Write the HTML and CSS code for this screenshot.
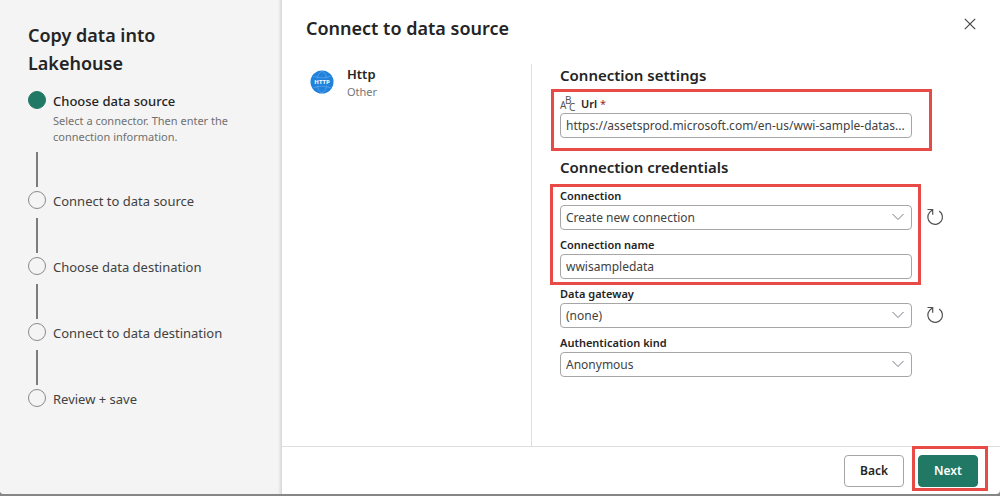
FILE: index.html
```html
<!DOCTYPE html>
<html lang="en">
<head>
<meta charset="utf-8">
<meta name="viewport" content="width=device-width, initial-scale=1">
<title>Copy data into Lakehouse</title>
<link rel="stylesheet" href="styles.css">
</head>
<body>
<div class="wizard">
  <aside class="sidebar">
    <h1 class="sidebar-title">Copy data into Lakehouse</h1>
    <ol class="steps">
      <li class="step step-active">
        <span class="rail"><span class="dot"></span><span class="line"></span></span>
        <div class="step-text">
          <div class="step-name">Choose data source</div>
          <p class="step-note">Select a connector. Then enter the connection information.</p>
        </div>
      </li>
      <li class="step">
        <span class="rail"><span class="dot"></span><span class="line"></span></span>
        <div class="step-text"><div class="step-name">Connect to data source</div></div>
      </li>
      <li class="step">
        <span class="rail"><span class="dot"></span><span class="line"></span></span>
        <div class="step-text"><div class="step-name">Choose data destination</div></div>
      </li>
      <li class="step">
        <span class="rail"><span class="dot"></span><span class="line"></span></span>
        <div class="step-text"><div class="step-name">Connect to data destination</div></div>
      </li>
      <li class="step">
        <span class="rail"><span class="dot"></span></span>
        <div class="step-text"><div class="step-name">Review + save</div></div>
      </li>
    </ol>
  </aside>

  <main class="main">
    <header class="header">
      <h2 class="page-title">Connect to data source</h2>
      <button class="icon-button" type="button" aria-label="Close">
        <svg width="12" height="12" viewBox="0 0 12 12" fill="none" stroke="#444" stroke-width="1.2"><path d="M.8.8l10.4 10.4M11.2.8L.8 11.2"/></svg>
      </button>
    </header>

    <div class="content">
      <section class="connector">
        <svg class="connector-icon" width="24" height="24" viewBox="0 0 24 24">
          <circle cx="12" cy="12" r="11.5" fill="#2182dc"/>
          <g fill="none" stroke="#63a8ea" stroke-width=".7">
            <ellipse cx="12" cy="12" rx="5" ry="10.5"/>
            <path d="M3.500 6.500q8.500 3 17 0M3.500 17.500q8.500-3 17 0"/>
          </g>
          <path d="M1 8.500h22v7H1z" fill="#2182dc"/>
          <text class="http-text" x="12" y="14" text-anchor="middle">HTTP</text>
        </svg>
        <div>
          <div class="connector-name">Http</div>
          <div class="connector-kind">Other</div>
        </div>
      </section>

      <form class="form" id="connection-form">
        <h3 class="group-title">Connection settings</h3>
        <div class="fields">
          <div class="field">
            <label class="label" for="url">
              <svg class="abc" width="16" height="18" viewBox="0 0 16 18"><text x="0" y="14">A</text><text x="5" y="9">B</text><text x="9" y="16">C</text></svg>
              <span>Url <span class="required">*</span></span>
            </label>
            <input class="control" id="url" type="text" value="https://assetsprod.microsoft.com/en-us/wwi-sample-datas...">
          </div>
          <span class="highlight highlight-url"></span>
        </div>

        <h3 class="group-title group-title-next">Connection credentials</h3>
        <div class="fields">
          <div class="field">
            <label class="label" for="connection">Connection</label>
            <div class="select">
              <select class="control" id="connection"><option>Create new connection</option></select>
              <svg class="chevron" width="12" height="8" viewBox="0 0 12 8"><path d="M.5 1L6 6.500 11.500 1"/></svg>
              <button class="refresh" type="button" aria-label="Refresh connections">
                <svg width="18" height="18" viewBox="0 0 18 18"><path d="M1.500 1.500h5.200v5.200M6.500 1.700L3.600 4.300A7.300 7.300 0 1 0 13.200 3"/></svg>
              </button>
            </div>
          </div>
          <div class="field">
            <label class="label" for="connection-name">Connection name</label>
            <input class="control" id="connection-name" type="text" value="wwisampledata">
          </div>
          <span class="highlight highlight-connection"></span>
        </div>
        <div class="fields fields-next">
          <div class="field">
            <label class="label" for="gateway">Data gateway</label>
            <div class="select">
              <select class="control" id="gateway"><option>(none)</option></select>
              <svg class="chevron" width="12" height="8" viewBox="0 0 12 8"><path d="M.5 1L6 6.500 11.500 1"/></svg>
              <button class="refresh" type="button" aria-label="Refresh gateways">
                <svg width="18" height="18" viewBox="0 0 18 18"><path d="M1.500 1.500h5.200v5.200M6.500 1.700L3.600 4.300A7.300 7.300 0 1 0 13.200 3"/></svg>
              </button>
            </div>
          </div>
          <div class="field">
            <label class="label" for="auth">Authentication kind</label>
            <div class="select">
              <select class="control" id="auth"><option>Anonymous</option></select>
              <svg class="chevron" width="12" height="8" viewBox="0 0 12 8"><path d="M.5 1L6 6.500 11.500 1"/></svg>
            </div>
          </div>
        </div>
      </form>
    </div>

    <footer class="footer">
      <button class="button" type="button">Back</button>
      <div class="next">
        <button class="button button-primary" type="submit" form="connection-form">Next</button>
        <span class="highlight highlight-next"></span>
      </div>
    </footer>
  </main>
</div>
</body>
</html>
```

FILE: styles.css
```css
* {
  box-sizing: border-box;
}

body {
  margin: 0;
  background: #868686;
  color: #242424;
  font: 13px/20px "Noto Sans", "Open Sans", sans-serif;
}

h1, h2, h3, p, ol {
  margin: 0;
  padding: 0;
}

button, input, select {
  font: inherit;
  color: inherit;
}

.wizard {
  display: grid;
  grid-template-columns: 282px 1fr;
  min-height: calc(100vh - 2px);
  border-radius: 0 0 4px 4px;
  overflow: hidden;
  background: #fff;
}

/* Steps */
.sidebar {
  padding: 21px 28px;
  background: linear-gradient(to left, #d6d6d6, #f4f4f4 4px);
}

.sidebar-title {
  max-width: 160px;
  font-size: 18px;
  line-height: 28px;
  font-weight: 600;
}

.steps {
  margin-top: 14px;
  list-style: none;
}

.step {
  display: flex;
  gap: 7px;
  color: #424242;
}

.rail {
  display: flex;
  flex-direction: column;
  align-items: center;
  justify-content: space-between;
  padding-bottom: 4px;
}

.dot {
  width: 18px;
  height: 18px;
  border: 1px solid #8a8a8a;
  border-radius: 50%;
}

.line {
  width: 2px;
  height: 35px;
  background: #7c7c7c;
}

.step-text {
  padding-bottom: 46px;
}

.step:last-child .step-text {
  padding-bottom: 0;
}

.step-active .dot {
  border-color: #217864;
  background: #217864;
}

.step-active .step-name {
  color: #242424;
  font-weight: 500;
}

.step-note {
  margin-top: 2px;
  font-size: 11px;
  line-height: 16px;
  color: #707070;
}

/* Main panel */
.main {
  display: flex;
  flex-direction: column;
}

.header {
  display: flex;
  align-items: flex-start;
  justify-content: space-between;
  padding: 14px 20px 22px 24px;
}

.page-title {
  font-size: 18px;
  line-height: 28px;
  font-weight: 600;
}

.icon-button, .refresh {
  display: grid;
  place-items: center;
  width: 20px;
  height: 20px;
  padding: 0;
  border: 0;
  background: none;
}

.content {
  flex: 1;
  display: grid;
  grid-template-columns: 226px 1fr;
  padding-left: 24px;
}

.connector {
  display: flex;
  align-items: flex-start;
  gap: 13px;
  padding-left: 4px;
  border-right: 1px solid #dedede;
}

.connector-icon {
  margin-top: 6px;
}

.http-text {
  font: bold 6px "Open Sans", sans-serif;
  fill: #fff;
}

.connector-name {
  font-weight: 600;
}

.connector-kind {
  font-size: 11px;
  line-height: 16px;
  color: #767676;
}

.form {
  padding: 0 88px 24px 28px;
}

.group-title {
  margin-bottom: 9px;
  font-size: 15px;
  line-height: 22px;
  font-weight: 600;
}

.group-title-next {
  margin-top: 18px;
}

.fields {
  position: relative;
  display: grid;
  gap: 6px;
}

.fields-next {
  margin-top: 6px;
}

.label {
  display: flex;
  gap: 5px;
  font-size: 11px;
  line-height: 18px;
  font-weight: 600;
}

.abc {
  overflow: visible;
  font: 10px "Noto Sans", sans-serif;
  fill: #555;
}

.required {
  color: #a4262c;
  font-weight: 400;
}

.control {
  display: block;
  width: 100%;
  height: 25px;
  padding: 0 2px 0 5px;
  border: 1px solid #a6a6a6;
  border-radius: 4px;
  background: #fff;
  color: #424242;
  font-size: 12px;
  line-height: 20px;
  text-overflow: ellipsis;
  appearance: none;
}

.select {
  position: relative;
}

.chevron {
  position: absolute;
  top: 8px;
  right: 8px;
  fill: none;
  stroke: #767b84;
  pointer-events: none;
}

.refresh {
  position: absolute;
  top: 2px;
  left: calc(100% + 13px);
}

.refresh svg {
  fill: none;
  stroke: #505050;
  stroke-width: 1.2;
}

/* Footer */
.footer {
  display: flex;
  justify-content: flex-end;
  gap: 14px;
  padding: 8px 22px 7px;
  border-top: 1px solid #dedede;
}

.button {
  display: block;
  width: 60px;
  height: 32px;
  padding: 0;
  border: 1px solid #a6a6a6;
  border-radius: 4px;
  background: #fff;
  font-size: 12px;
  font-weight: 600;
}

.button-primary {
  border-color: #217864;
  background: #217864;
  color: #fff;
}

.next {
  position: relative;
}

/* Callout frames */
.highlight {
  position: absolute;
  border: 3px solid #e84a45;
  pointer-events: none;
}

.highlight-url {
  inset: -6px -20px -13px -9px;
}

.highlight-connection {
  inset: -3px -9px -6px -10px;
}

.highlight-next {
  inset: -9px -10px -4px -6px;
}
```
